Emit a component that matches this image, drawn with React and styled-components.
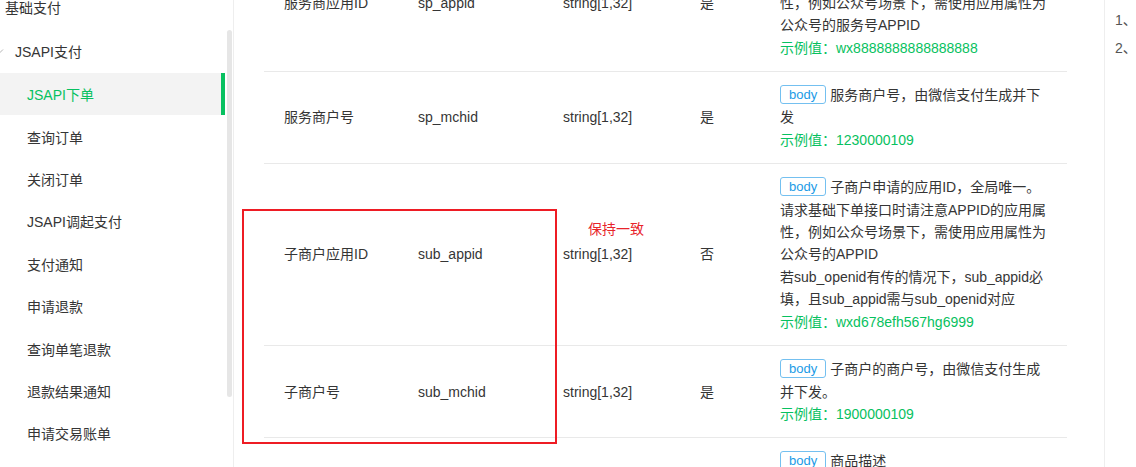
import React from "react";
import styled, { createGlobalStyle } from "styled-components";

const Global = createGlobalStyle`
  html, body { margin: 0; padding: 0; background: #fff; }
  body {
    font-family: "Liberation Sans", "Noto Sans CJK SC", sans-serif;
    font-size: 14px;
    color: #353535;
    overflow: hidden;
  }
  #root { height: 467px; }
`;

const Page = styled.div`
  display: flex;
  width: 1136px;
  height: 467px;
  overflow: hidden;
`;

const Sidebar = styled.nav`
  position: relative;
  flex: 0 0 233px;
  border-right: 1px solid #eeeeee;
  overflow: hidden;
`;

const Menu = styled.ul`
  list-style: none;
  margin: -14px 0 0 0;
  padding: 0;
`;

const MenuItem = styled.li`
  display: flex;
  align-items: center;
  box-sizing: border-box;
  height: ${(p) => p.$h || 42.4}px;
  padding-left: ${(p) => p.$indent}px;
  margin-right: 8px;
  color: ${(p) => (p.$active ? "#07c160" : "#353535")};
  background: ${(p) => (p.$active ? "#f3f3f3" : "transparent")};
  border-right: 4px solid ${(p) => (p.$active ? "#07c160" : "transparent")};
  white-space: nowrap;
`;

const Chevron = styled.svg`
  width: 8px;
  height: 8px;
  margin-left: -4px;
  margin-right: 11px;
  flex: none;
`;

const ScrollThumb = styled.div`
  position: absolute;
  right: 1px;
  top: 30px;
  width: 5px;
  height: 367px;
  border-radius: 3px;
  background: #e6e6e6;
`;

const Main = styled.main`
  position: relative;
  flex: 0 0 870px;
  padding-left: 30px;
  box-sizing: border-box;
  overflow: hidden;
`;

const Table = styled.div`
  width: 803px;
  margin-top: -65px;
`;

const Row = styled.div`
  display: grid;
  grid-template-columns: 134px 145px 137px 80px 1fr;
  align-items: center;
  border-bottom: 1px solid #e9e9e9;
`;

const Cell = styled.div`
  padding: 12px 20px;
  line-height: 22.4px;
  color: #353535;
`;

const Tag = styled.span`
  display: inline-block;
  box-sizing: border-box;
  height: 19px;
  line-height: 17px;
  padding: 0 8px;
  margin-right: 4px;
  border: 1px solid #74c0f0;
  border-radius: 3px;
  color: #1b9be6;
  font-size: 13px;
  vertical-align: 1px;
`;

const Example = styled.div`
  color: #07c160;
`;

const Aside = styled.aside`
  flex: 1;
  border-left: 1px solid #eeeeee;
  padding: 6px 0 0 10px;
  overflow: hidden;
  white-space: nowrap;
`;

const AsideLine = styled.div`
  color: #555;
  font-size: 14px;
  line-height: 28px;
  width: 300px;
`;

const AsideFaint = styled.span`
  color: #bbb;
`;

const RedBox = styled.div`
  position: absolute;
  left: 8px;
  top: 209px;
  width: 315px;
  height: 235px;
  box-sizing: border-box;
  border: 2px solid #ee1c24;
`;

const RedNote = styled.div`
  position: absolute;
  left: 354px;
  top: 218px;
  color: #e8242b;
  font-size: 14px;
  line-height: 22px;
`;

const menu = [
  { label: "基础支付", indent: 5, h: 42 },
  { label: "JSAPI支付", indent: 0, h: 45, chevron: true },
  { label: "JSAPI下单", indent: 27, active: true },
  { label: "查询订单", indent: 27 },
  { label: "关闭订单", indent: 27 },
  { label: "JSAPI调起支付", indent: 27 },
  { label: "支付通知", indent: 27 },
  { label: "申请退款", indent: 27 },
  { label: "查询单笔退款", indent: 27 },
  { label: "退款结果通知", indent: 27 },
  { label: "申请交易账单", indent: 27 },
  { label: "申请资金账单", indent: 27 },
];

const rows = [
  {
    name: "服务商应用ID",
    key: "sp_appid",
    type: "string[1,32]",
    req: "是",
    desc: [
      "服务商申请的应用ID，全局唯一。请求基础下单接口时请注意APPID的应用属性，例如公众号场景下，需使用应用属性为公众号的服务号APPID",
    ],
    example: "wx8888888888888888",
  },
  {
    name: "服务商户号",
    key: "sp_mchid",
    type: "string[1,32]",
    req: "是",
    desc: ["服务商户号，由微信支付生成并下发"],
    example: "1230000109",
  },
  {
    name: "子商户应用ID",
    key: "sub_appid",
    type: "string[1,32]",
    req: "否",
    desc: [
      "子商户申请的应用ID，全局唯一。请求基础下单接口时请注意APPID的应用属性，例如公众号场景下，需使用应用属性为公众号的APPID",
      "若sub_openid有传的情况下，sub_appid必填，且sub_appid需与sub_openid对应",
    ],
    example: "wxd678efh567hg6999",
  },
  {
    name: "子商户号",
    key: "sub_mchid",
    type: "string[1,32]",
    req: "是",
    desc: ["子商户的商户号，由微信支付生成并下发。"],
    example: "1900000109",
  },
  {
    name: "商品描述",
    key: "description",
    type: "string[1,127]",
    req: "是",
    desc: ["商品描述", "用户在商户系统中看到的商品描述信息，请按照规范填写，不超过127个字符。"],
    example: "Image形象店-深圳腾大-QQ公仔",
  },
];

export default function App() {
  return (
    <>
      <Global />
      <Page>
        <Sidebar>
          <Menu>
            {menu.map((m) => (
              <MenuItem key={m.label} $indent={m.indent} $h={m.h} $active={m.active}>
                {m.chevron && (
                  <Chevron viewBox="0 0 8 8">
                    <polyline points="1,2.5 4,5.5 7,2.5" fill="none" stroke="#b5b5b5" strokeWidth="1" />
                  </Chevron>
                )}
                {m.label}
              </MenuItem>
            ))}
          </Menu>
          <ScrollThumb />
        </Sidebar>
        <Main>
          <Table>
            {rows.map((r) => (
              <Row key={r.key}>
                <Cell>{r.name}</Cell>
                <Cell>{r.key}</Cell>
                <Cell>{r.type}</Cell>
                <Cell>{r.req}</Cell>
                <Cell>
                  {r.desc.map((d, i) => (
                    <div key={i}>
                      {i === 0 && <Tag>body</Tag>}
                      {d}
                    </div>
                  ))}
                  <Example>示例值：{r.example}</Example>
                </Cell>
              </Row>
            ))}
          </Table>
          <RedBox />
          <RedNote>保持一致</RedNote>
        </Main>
        <Aside>
          <AsideLine>1、<AsideFaint>请求参数说明</AsideFaint></AsideLine>
          <AsideLine>2、<AsideFaint>返回参数说明</AsideFaint></AsideLine>
        </Aside>
      </Page>
    </>
  );
}
